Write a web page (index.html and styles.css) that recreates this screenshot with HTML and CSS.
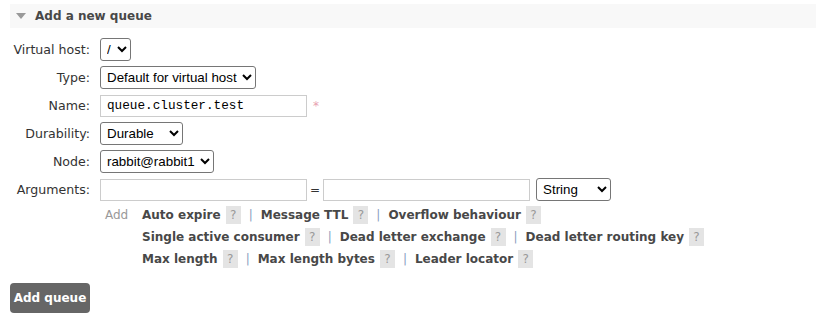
FILE: index.html
```html
<!DOCTYPE html>
<html lang="en">
<head>
  <meta charset="UTF-8">
  <title>Add a new queue</title>
  <link rel="stylesheet" href="styles.css">
</head>
<body>

    <!-- Section: tambah queue -->
    <div class="section">
        <h2 class="section-title"><span class="arrow"></span>Add a new queue</h2>

        <form class="queue-form">
            <div class="form-grid">
                <label class="form-label" for="vhost">Virtual host:</label>
                <div class="form-field">
                    <select id="vhost" class="select-vhost"><option>/</option></select>
                </div>

                <label class="form-label" for="type">Type:</label>
                <div class="form-field">
                    <select id="type"><option>Default for virtual host</option></select>
                </div>

                <label class="form-label" for="name">Name:</label>
                <div class="form-field">
                    <input type="text" id="name" class="input-name" value="queue.cluster.test">
                    <span class="required">*</span>
                </div>

                <label class="form-label" for="durable">Durability:</label>
                <div class="form-field">
                    <select id="durable" class="select-durable"><option>Durable</option></select>
                </div>

                <label class="form-label" for="node">Node:</label>
                <div class="form-field">
                    <select id="node"><option>rabbit@rabbit1</option></select>
                </div>

                <label class="form-label" for="argkey">Arguments:</label>
                <div class="form-field args">
                    <div class="args-row">
                        <input type="text" id="argkey" class="input-arg">
                        <span class="equals">=</span>
                        <input type="text" class="input-arg">
                        <select class="select-argtype"><option>String</option></select>
                    </div>
                    <div class="args-help">
                        <span class="add-label">Add</span>
                        <div class="shortcuts">
                            <div class="shortcut-line">
                                <a href="#">Auto expire</a><span class="help">?</span><span class="sep">|</span>
                                <a href="#">Message TTL</a><span class="help">?</span><span class="sep">|</span>
                                <a href="#">Overflow behaviour</a><span class="help">?</span>
                            </div>
                            <div class="shortcut-line">
                                <a href="#">Single active consumer</a><span class="help">?</span><span class="sep">|</span>
                                <a href="#">Dead letter exchange</a><span class="help">?</span><span class="sep">|</span>
                                <a href="#">Dead letter routing key</a><span class="help">?</span>
                            </div>
                            <div class="shortcut-line">
                                <a href="#">Max length</a><span class="help">?</span><span class="sep">|</span>
                                <a href="#">Max length bytes</a><span class="help">?</span><span class="sep">|</span>
                                <a href="#">Leader locator</a><span class="help">?</span>
                            </div>
                        </div>
                    </div>
                </div>
            </div>

            <button type="submit" class="btn">Add queue</button>
        </form>
    </div>

</body>
</html>
```

FILE: styles.css
```css
body {
  margin: 0;
  font-family: "DejaVu Sans", Verdana, sans-serif;
  font-size: 12px;
  color: #484848;
  background: #fff;
}

/* Section dengan judul abu-abu */
.section {
  padding: 4px 0 0 10px;
}

.section-title {
  margin: 0;
  height: 24px;
  line-height: 24px;
  background: #f8f8f8;
  font-size: 12px;
  font-weight: bold;
  color: #484848;
  display: flex;
  align-items: center;
}

.arrow {
  width: 0;
  height: 0;
  margin: 0 9px 0 6px;
  border-left: 5px solid transparent;
  border-right: 5px solid transparent;
  border-top: 6px solid #999;
}

/* Form: label kiri, field kanan */
.queue-form {
  padding-top: 10px;
}

.form-grid {
  display: grid;
  grid-template-columns: 80px 1fr;
  column-gap: 10px;
  row-gap: 5px;
  align-items: start;
}

.form-label {
  text-align: right;
  line-height: 23px;
  font-size: 12.6px;
  color: #333;
}

.form-field {
  display: flex;
  align-items: center;
  min-height: 23px;
}

select {
  font-family: "Liberation Sans", Arial, sans-serif;
  font-size: 13.33px;
  height: 23px;
  padding: 0 2px;
  border: 1px solid #767676;
  border-radius: 3px;
  background: #fff;
  color: #000;
}

input[type="text"] {
  height: 22px;
  box-sizing: border-box;
  border: 1px solid #ccc;
  padding: 1px 6px;
  font-family: "Liberation Mono", "Courier New", monospace;
  font-size: 12.7px;
  color: #000;
}

.input-name,
.input-arg {
  width: 207px;
}

.select-vhost { width: 31px; }
.select-durable { width: 83px; }

.required {
  color: #e8a0b0;
  margin-left: 6px;
  font-size: 12px;
}

/* Arguments */
.form-field.args {
  display: block;
}

.args-row {
  display: flex;
  align-items: center;
}

.equals {
  margin: 0 3px;
  color: #333;
}

.select-argtype {
  width: 75px;
  margin-left: 6px;
}

.args-help {
  display: flex;
  padding-top: 3px;
}

.add-label {
  color: #999;
  width: 42px;
  padding-left: 5px;
  box-sizing: border-box;
  line-height: 22px;
}

.shortcut-line {
  display: flex;
  align-items: center;
  height: 22px;
}

.shortcut-line a {
  color: #484848;
  font-weight: bold;
  text-decoration: none;
  font-size: 12px;
}

.help {
  display: inline-block;
  width: 15px;
  height: 18px;
  line-height: 18px;
  margin-left: 5px;
  text-align: center;
  background: #e4e4e4;
  color: #999;
  font-size: 12px;
}

.sep {
  color: #8aa0c0;
  margin: 0 8px;
}

/* Tombol */
.btn {
  margin-top: 13px;
  width: 80px;
  height: 30px;
  background: #666;
  color: #fff;
  border: none;
  border-radius: 4px;
  font-family: "DejaVu Sans", Verdana, sans-serif;
  font-size: 12px;
  font-weight: bold;
  padding: 0;
}
```
